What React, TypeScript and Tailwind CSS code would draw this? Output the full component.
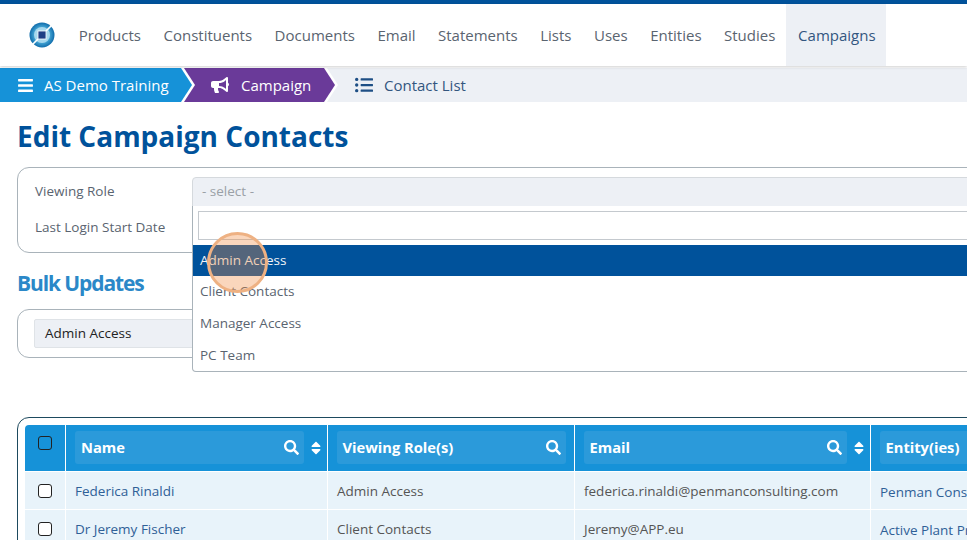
import React from "react";
import { FaBars, FaBullhorn, FaListUl, FaSearch, FaSort } from "react-icons/fa";

const nav = ["Products", "Constituents", "Documents", "Email", "Statements", "Lists", "Uses", "Entities", "Studies"];
const font = { fontFamily: '"Open Sans", sans-serif' };

function Logo() {
  return (
    <svg width="26" height="26" viewBox="0 0 26 26" className="shrink-0">
      <defs>
        <radialGradient id="lg" cx="50%" cy="50%" r="50%">
          <stop offset="0%" stopColor="#cfeaf6" />
          <stop offset="55%" stopColor="#4fb0dc" />
          <stop offset="100%" stopColor="#0f6cab" />
        </radialGradient>
      </defs>
      <circle cx="13" cy="13" r="12.5" fill="url(#lg)" />
      <circle cx="13" cy="13" r="8" fill="#a6d8ee" />
      <path d="M2 24 L9 17 M17 9 L24 2" stroke="#fff" strokeWidth="1.6" />
      <rect x="9" y="9" width="8" height="8" fill="#1e3f86" stroke="#fff" strokeWidth="0.8" />
    </svg>
  );
}

function HeadCell({ label, w, sort, first }: { label: string; w: string; sort?: boolean; first?: boolean }) {
  return (
    <div className={`${w} shrink-0 h-full border-r border-white flex items-center ${first ? "pl-[9px]" : "pl-[8.5px]"} ${sort ? "pr-[3px]" : "pr-[8px]"}`}>
      <div className="flex-1 h-[33px] -mt-px bg-[#2b9ada] rounded-[3px] flex items-center justify-between pl-[6px] pr-[5px]">
        <span className="text-[14.7px] font-bold text-white whitespace-nowrap">{label}</span>
        <FaSearch className="text-white text-[15px]" />
      </div>
      {sort && <FaSort className="text-white text-[16px] ml-[4.5px] shrink-0" />}
    </div>
  );
}

function Row({ name, role, email, entity }: { name: string; role: string; email: string; entity: string }) {
  return (
    <div className="flex h-[38px] bg-[#e8f3fa] border-b border-white text-[13.5px] text-[#555]">
      <div className="w-[41px] shrink-0 border-r border-white flex items-center justify-center pr-px">
        <div className="w-[14px] h-[14px] border border-[#222] rounded-[3px] bg-white" />
      </div>
      <div className="w-[262px] shrink-0 border-r border-white flex items-center pl-[9px] pt-px text-[#2f6097]">{name}</div>
      <div className="w-[247px] shrink-0 border-r border-white flex items-center pl-[9px] pt-px">{role}</div>
      <div className="w-[296px] shrink-0 border-r border-white flex items-center pl-[9px] pt-px">{email}</div>
      <div className="w-[300px] shrink-0 flex items-center pl-[9px] pt-[3px] text-[#2f6097] whitespace-nowrap">{entity}</div>
    </div>
  );
}

export default function App() {
  return (
    <div className="relative w-[967px] h-[540px] overflow-hidden bg-white" style={font}>
      <div className="h-[4px] bg-[#00529b]" />
      <nav className="h-[62px] flex items-stretch bg-white pl-[29px] shadow-[0_1px_3px_rgba(0,0,0,0.2)] relative z-10">
        <div className="flex items-center mr-[12.5px] -mt-[1px]"><Logo /></div>
        {nav.map((n) => (
          <div key={n} className="flex items-center px-[11.25px] text-[15px] text-[#5a6470] whitespace-nowrap">{n}</div>
        ))}
        <div className="flex items-center -ml-[1px] pl-[12.5px] pr-[10.5px] bg-[#edf0f5] text-[15px] text-[#33567f]">Campaigns</div>
      </nav>
      <div className="mt-[2px] h-[34px] bg-[#edf0f5] flex items-stretch text-[15px]">
        <div className="relative z-[2] w-[181px] bg-[#1692d8] text-white flex items-center pl-[17px]">
          <FaBars className="text-[17px] mr-[10px]" />
          <span className="whitespace-nowrap">AS Demo Training</span>
          <div className="absolute top-0 left-full h-full w-[14px] bg-white [clip-path:polygon(0_0,3px_0,100%_50%,3px_100%,0_100%)]" />
          <div className="absolute top-0 left-full h-full w-[11px] bg-[#1692d8] [clip-path:polygon(0_0,100%_50%,0_100%)]" />
        </div>
        <div className="relative z-[1] w-[143px] bg-[#6a3a99] text-white flex items-center pl-[30px]">
          <FaBullhorn className="text-[18px] mr-[12px]" />
          <span>Campaign</span>
          <div className="absolute top-0 left-full h-full w-[14px] bg-white [clip-path:polygon(0_0,3px_0,100%_50%,3px_100%,0_100%)]" />
          <div className="absolute top-0 left-full h-full w-[11px] bg-[#6a3a99] [clip-path:polygon(0_0,100%_50%,0_100%)]" />
        </div>
        <div className="flex items-center pl-[31px] text-[#33567f]">
          <FaListUl className="text-[18px] mr-[11px] text-[#1e4f85]" />
          <span>Contact List</span>
        </div>
      </div>

      <div className="pl-[17px] w-[1200px]">
        <h1 className="text-[28px] leading-[38px] font-bold text-[#00529b] mt-[15px]">Edit Campaign Contacts</h1>
        <div className="mt-[12px] h-[86px] border border-[#a9b3ba] rounded-[12px] pl-[17px] pt-[9px] text-[13.5px] text-[#5a6470]">
          <div className="flex items-start h-[30px]">
            <div className="w-[157px] shrink-0 leading-[28px]">Viewing Role</div>
            <div className="flex-1 h-[30px] bg-[#edf0f5] border border-[#d5d9dd] rounded-t-[4px] flex items-start px-[9px] leading-[27px] text-[#9aa0a6]">- select -</div>
          </div>
          <div className="h-[36px] pt-[6px] leading-[28px]">Last Login Start Date</div>
        </div>
        <h2 className="mt-[15px] text-[21px] leading-[30px] font-bold text-[#2b88c8] -tracking-[1.1px]">Bulk Updates</h2>
        <div className="mt-[11px] h-[49px] border border-[#a9b3ba] rounded-[12px] pl-[16px] flex items-center">
          <div className="w-[300px] h-[29px] bg-[#edf0f5] border border-[#dfe3e7] rounded-[2px] flex items-center px-[10px] text-[13.5px] text-[#222]">Admin Access</div>
        </div>
        <div className="mt-[59px] h-[200px] border border-[#1d4a5e] rounded-t-[12px] pl-[7px] pt-[7px]">
          <div className="flex h-[47px] bg-[#1692d8] rounded-t-[4px] border-b border-white">
            <div className="w-[41px] shrink-0 h-full border-r border-white flex justify-center pt-[11px] pr-px">
              <div className="w-[14px] h-[14px] border border-[#222] rounded-[3px] bg-[#1692d8]" />
            </div>
            <HeadCell label="Name" w="w-[262px]" sort first />
            <HeadCell label="Viewing Role(s)" w="w-[247px]" />
            <HeadCell label="Email" w="w-[296px]" sort />
            <HeadCell label="Entity(ies)" w="w-[300px]" />
          </div>
          <Row name="Federica Rinaldi" role="Admin Access" email="federica.rinaldi@penmanconsulting.com" entity="Penman Consulting" />
          <Row name="Dr Jeremy Fischer" role="Client Contacts" email="Jeremy@APP.eu" entity="Active Plant Products" />
        </div>
      </div>

      {/* open dropdown */}
      <div className="absolute left-[192px] top-[206px] w-[800px] h-[166px] bg-white border border-[#a9b3ba] border-t-0 rounded-bl-[4px] text-[13.5px] text-[#5a6470] z-20">
        <div className="h-[39px] pl-[5px] pt-[5px]">
          <div className="h-[29px] border border-[#c4c9ce]" />
        </div>
        <div className="h-[31px] bg-[#00529b] text-[#f2f5f8] flex items-center pl-[7px] pb-px">Admin Access</div>
        <div className="h-[32px] flex items-center pl-[7px] pb-px">Client Contacts</div>
        <div className="h-[31px] flex items-center pl-[7px]">Manager Access</div>
        <div className="h-[32px] flex items-center pl-[7px]">PC Team</div>
      </div>

      {/* click highlight */}
      <div className="absolute left-[207px] top-[232px] w-[61px] h-[61px] rounded-full bg-[#f08a40]/35 border-[3px] border-[#eeb183] z-30" />
    </div>
  );
}
